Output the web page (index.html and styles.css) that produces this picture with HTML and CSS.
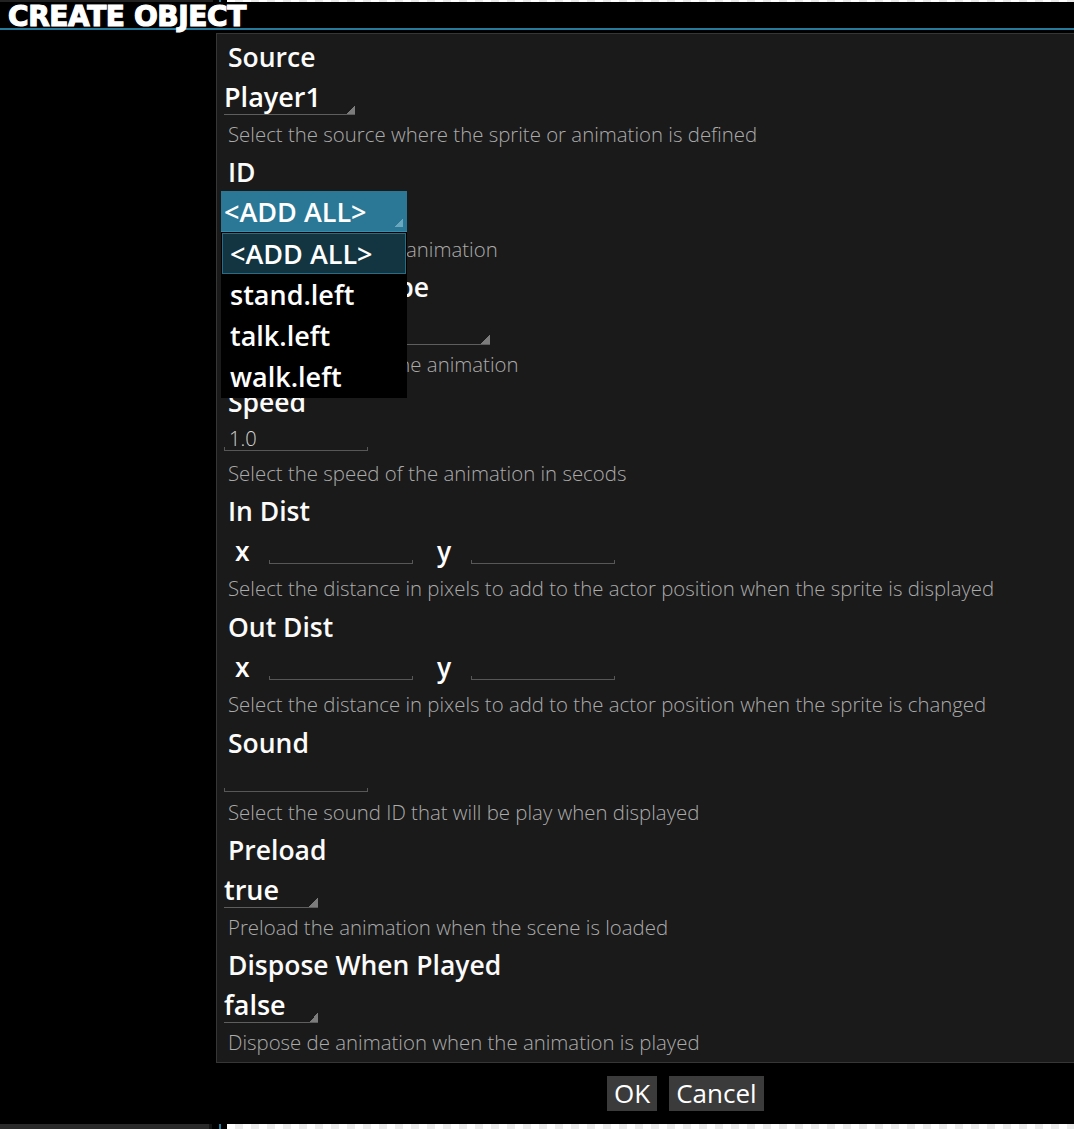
FILE: index.html
```html
<!DOCTYPE html>
<html lang="en">
<head>
<meta charset="utf-8">
<title>Create Object</title>
<link rel="stylesheet" href="styles.css">
</head>
<body>
<div class="strip top">
  <span class="s-dark"></span><span class="s-gap"></span><span class="s-tick"></span><span class="s-gap2"></span><span class="s-checker"></span>
</div>
<header class="title">CREATE OBJECT</header>

<main class="dialog">
  <section class="field">
    <div class="label">Source</div>
    <div class="ctl"><div class="select w-source">Player1</div></div>
    <div class="desc">Select the source where the sprite or animation is defined</div>
  </section>

  <section class="field">
    <div class="label">ID</div>
    <div class="ctl">
      <div class="select open w-id">&lt;ADD ALL&gt;
        <ul class="options">
          <li class="opt active">&lt;ADD ALL&gt;</li>
          <li class="opt">stand.left</li>
          <li class="opt">talk.left</li>
          <li class="opt">walk.left</li>
        </ul>
      </div>
    </div>
    <div class="desc">Select the sprite or animation</div>
  </section>

  <section class="field">
    <div class="label">Animation Type</div>
    <div class="ctl"><div class="select w-type"></div></div>
    <div class="desc">Select the type of the animation</div>
  </section>

  <section class="field">
    <div class="label">Speed</div>
    <div class="ctl ctl-input"><input class="input" type="text" value="1.0"></div>
    <div class="desc">Select the speed of the animation in secods</div>
  </section>

  <section class="field field-xy">
    <div class="label">In Dist</div>
    <div class="xy">
      <span class="axis">x</span><input class="input xy-input" type="text">
      <span class="axis axis-y">y</span><input class="input xy-input" type="text">
    </div>
    <div class="desc">Select the distance in pixels to add to the actor position when the sprite is displayed</div>
  </section>

  <section class="field field-xy">
    <div class="label">Out Dist</div>
    <div class="xy">
      <span class="axis">x</span><input class="input xy-input" type="text">
      <span class="axis axis-y">y</span><input class="input xy-input" type="text">
    </div>
    <div class="desc">Select the distance in pixels to add to the actor position when the sprite is changed</div>
  </section>

  <section class="field">
    <div class="label">Sound</div>
    <div class="ctl ctl-input ctl-sound"><input class="input" type="text"></div>
    <div class="desc">Select the sound ID that will be play when displayed</div>
  </section>

  <section class="field">
    <div class="label">Preload</div>
    <div class="ctl"><div class="select w-bool">true</div></div>
    <div class="desc">Preload the animation when the scene is loaded</div>
  </section>

  <section class="field">
    <div class="label">Dispose When Played</div>
    <div class="ctl"><div class="select w-bool">false</div></div>
    <div class="desc">Dispose de animation when the animation is played</div>
  </section>
</main>

<div class="buttons">
  <button class="btn" type="button">OK</button>
  <button class="btn" type="button">Cancel</button>
</div>

<div class="strip bottom">
  <span class="s-dark"></span><span class="s-edge"></span><span class="s-gap"></span><span class="s-tick"></span><span class="s-gap2"></span><span class="s-checker"></span>
</div>
</body>
</html>
```

FILE: styles.css
```css
* { box-sizing: border-box; }

html, body {
  margin: 0;
  padding: 0;
  background: #000;
}

body {
  width: 1074px;
  height: 1129px;
  overflow: hidden;
  display: flex;
  flex-direction: column;
  font-family: "Open Sans", "DejaVu Sans", sans-serif;
  color: #fff;
}

/* thin strips of the page behind */
.strip {
  display: flex;
  flex-shrink: 0;
}
.strip.top { height: 2px; }
.strip.bottom { height: 5px; margin-top: auto; }
.s-dark { width: 213px; background: #222; }
.strip.bottom .s-dark { width: 209px; background: #2a2a2a; }
.s-edge { width: 3px; background: #141414; }
.s-gap { width: 6px; }
.strip.bottom .s-gap { width: 7px; }
.s-tick { width: 2px; background: #2a7d9b; }
.s-gap2 { width: 6px; }
.s-checker {
  flex: 1;
  background: repeating-linear-gradient(90deg, #fff 0 8px, #ebebeb 8px 16px);
}

.title {
  flex-shrink: 0;
  height: 28px;
  padding: 0 0 0 8px;
  border-bottom: 2px solid #267b9b;
  font-family: "DejaVu Sans", "Open Sans", sans-serif;
  font-size: 28px;
  line-height: 30px;
  font-weight: 700;
  letter-spacing: -0.4px;
  -webkit-text-stroke: 1.2px #fff;
  color: #fff;
  white-space: nowrap;
}

.dialog {
  flex-shrink: 0;
  margin: 3px 0 0 216px;
  padding: 2px 0 3px 4px;
  background: #1a1a1a;
  border: 1px solid #363636;
  border-right: none;
}

.label {
  height: 40px;
  line-height: 42px;
  padding-left: 7px;
  font-size: 26.5px;
  font-weight: 600;
  color: #fbfbfb;
  white-space: nowrap;
}

.desc {
  height: 35px;
  line-height: 36px;
  padding-left: 7px;
  font-size: 20.4px;
  font-weight: 300;
  color: #ababab;
  white-space: nowrap;
}
.field-xy .desc { height: 36px; }

.ctl { height: 40px; }
.ctl-input { height: 34px; }
.ctl-input.ctl-sound { height: 32px; }

/* dropdown */
.select {
  position: relative;
  display: inline-block;
  vertical-align: top;
  height: 39px;
  margin-left: 3px;
  line-height: 41px;
  font-size: 27px;
  font-weight: 600;
  color: #fff;
  border-bottom: 1px solid #5e5e5e;
  white-space: nowrap;
}
.select::after {
  content: "";
  position: absolute;
  right: 0;
  bottom: 0;
  width: 9px;
  height: 9px;
  background: linear-gradient(to bottom right, transparent 50%, #7c7c7c 50%);
}
.w-source { width: 131px; }
.w-type { width: 266px; }
.w-bool { width: 94px; }
.w-id { width: 186px; }

.select.open {
  margin-left: 0;
  padding-left: 3px;
  height: 41px;
  background: #2b7896;
  border-bottom: 1px solid #3c8cab;
}
.select.open::after {
  right: 4px;
  bottom: 4px;
  width: 8px;
  height: 8px;
  background: linear-gradient(to bottom right, transparent 50%, #6aa8c0 50%);
}

.options {
  position: absolute;
  left: 0;
  top: 41px;
  z-index: 5;
  width: 186px;
  margin: 0;
  padding: 1px 1px 1px;
  list-style: none;
  background: #000;
}
.opt {
  height: 41px;
  line-height: 42px;
  padding-left: 8px;
  font-size: 27px;
  font-weight: 600;
  color: #fff;
}
.opt.active {
  line-height: 40px;
  padding-left: 7px;
  background: #123541;
  border: 1px solid #2a6c84;
}

/* text inputs */
.input {
  display: block;
  width: 144px;
  height: 30px;
  margin: 0 0 0 3px;
  padding: 5px 0 0 5px;
  border: none;
  border-bottom: 1px solid #575757;
  outline: none;
  background:
    linear-gradient(#575757, #575757) left bottom / 1px 3px no-repeat,
    linear-gradient(#575757, #575757) right bottom / 1px 3px no-repeat;
  font-family: "Open Sans", "DejaVu Sans", sans-serif;
  font-size: 20px;
  font-weight: 300;
  color: #d4d4d4;
}

.xy {
  display: flex;
  align-items: flex-start;
  height: 40px;
  padding-left: 14px;
}
.axis {
  width: 34px;
  height: 40px;
  line-height: 42px;
  font-size: 26.5px;
  font-weight: 600;
  color: #fff;
}
.axis-y { margin-left: 24px; }
.input.xy-input {
  height: 34px;
  margin-left: 0;
}

/* buttons */
.buttons {
  flex-shrink: 0;
  display: flex;
  gap: 12px;
  margin-top: 13px;
  padding-left: 607px;
}
.btn {
  height: 35px;
  padding: 0 7px;
  border: none;
  background: #3b3b3b;
  color: #fff;
  font-family: "Open Sans", "DejaVu Sans", sans-serif;
  font-size: 26px;
  line-height: 35px;
  font-weight: 400;
}
```
